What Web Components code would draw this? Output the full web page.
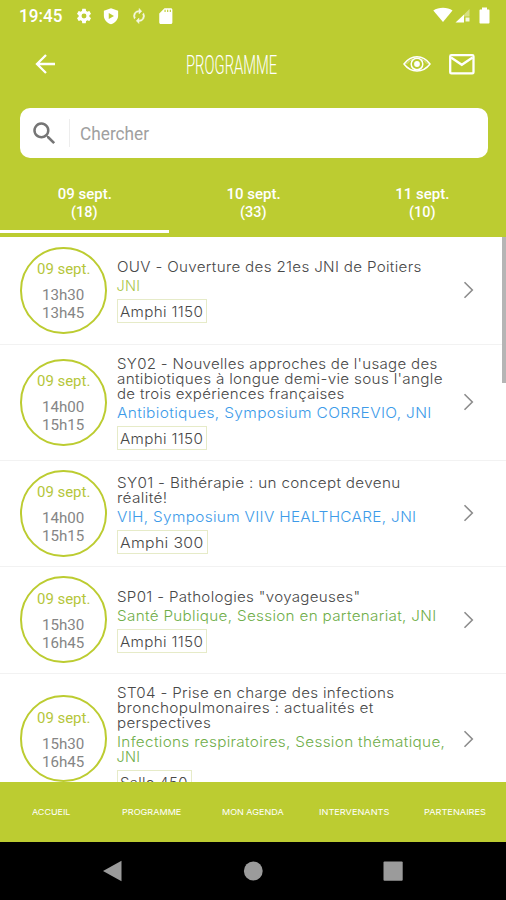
<!DOCTYPE html>
<html lang="fr">
<head>
<meta charset="utf-8">
<title>Programme</title>
<style>
  body {
    margin: 0;
    background: #fff;
    font-family: Roboto, "Liberation Sans", sans-serif;
    --green: #bccc31;
  }
</style>
</head>
<body>
<programme-app></programme-app>

<script>
  // One line of text, stretched to a given width
  class FitLine extends HTMLElement {
    constructor() {
      super();
      this.attachShadow({ mode: "open" });
      this.shadowRoot.innerHTML = `
        <style>
          :host { display: block; white-space: nowrap; }
          span { display: inline-block; transform-origin: 0 50%; }
        </style>
        <span><slot></slot></span>
      `;
    }

    connectedCallback() {
      const width = Number(this.getAttribute("width"));
      const span = this.shadowRoot.querySelector("span");
      this.style.width = width + "px";
      span.style.transform = `scaleX(${width / span.offsetWidth})`;
    }
  }
  window.customElements.define("fit-line", FitLine);

  class StatusBar extends HTMLElement {
    constructor() {
      super();
      this.attachShadow({ mode: "open" });
      this.shadowRoot.innerHTML = `
        <style>
          :host {
            display: flex;
            align-items: center;
            box-sizing: border-box;
            height: 32px;
            padding: 0 16px 0 19px;
            color: #fff;
            font-size: 17.5px;
            font-weight: 500;
          }
          svg { display: block; fill: #fff; }
          .left { display: flex; align-items: center; gap: 9.3px; margin-left: 13px; }
          .right { display: flex; align-items: center; margin-left: auto; margin-top: -2px; }
        </style>
        <fit-line width="43">19:45</fit-line>
        <div class="left">
          <svg width="18" height="18" viewBox="0 0 24 24"><path d="M19.14 12.94c.04-.3.06-.61.06-.94s-.02-.64-.07-.94l2.03-1.58a.5.5 0 0 0 .12-.61l-1.92-3.32a.5.5 0 0 0-.59-.22l-2.39.96a7 7 0 0 0-1.62-.94l-.36-2.54a.48.48 0 0 0-.48-.41h-3.84c-.24 0-.43.17-.47.41l-.36 2.54c-.59.24-1.13.57-1.62.94l-2.39-.96a.5.5 0 0 0-.59.22L2.74 8.87a.48.48 0 0 0 .12.61l2.03 1.58a6.5 6.5 0 0 0 0 1.88l-2.03 1.58a.5.5 0 0 0-.12.61l1.92 3.32c.12.22.37.29.59.22l2.39-.96c.5.38 1.03.7 1.62.94l.36 2.54c.05.24.24.41.48.41h3.84c.24 0 .44-.17.47-.41l.36-2.54a7 7 0 0 0 1.62-.94l2.39.96c.22.08.47 0 .59-.22l1.92-3.32a.5.5 0 0 0-.12-.61zM12 15.3a3.3 3.3 0 1 1 0-6.6 3.3 3.3 0 0 1 0 6.6z"/></svg>
          <svg width="18" height="18" viewBox="0 0 24 24"><path fill-rule="evenodd" d="M12 1.5 2.5 5v6.5c0 5 4 9.5 9.5 11.5 5.5-2 9.5-6.5 9.5-11.5V5zM9 8v8l7-4z"/></svg>
          <svg width="18" height="18" viewBox="-1 -1 26 26" opacity=".85"><path stroke="#fff" stroke-width=".7" d="M12 6v3l4-4-4-4v3a8 8 0 0 0-6.76 12.26l1.46-1.46A6 6 0 0 1 12 6zm6.76 1.74L17.3 9.2A6 6 0 0 1 12 18v-3l-4 4 4 4v-3a8 8 0 0 0 6.76-12.26z"/></svg>
          <svg width="18" height="18" viewBox="0 0 24 24"><path d="M18.5 1.5H10L3 8.5v12c0 1.1.9 2 2 2h13.500c1.1 0 2-.9 2-2v-17c0-1.1-.9-2-2-2zM11.5 6.5H10v-3h1.500zm3.500 0h-1.500v-3H15zm3.500 0H17v-3h1.500z"/></svg>
        </div>
        <div class="right">
          <svg width="20" height="16" viewBox="0 0 20 16"><path d="M.3 3.500C5.5-.2 14.5-.2 19.500 3.500L10 15z"/></svg>
          <svg width="17" height="16" viewBox="0 0 17 16" style="margin-left: 2px"><path d="M.5 15.500 9 7.500V15.500z"/><path d="M9 7.500 14.500 2v7.500H9z" opacity=".4"/><path d="M10.500 10.500h4v4h-4z" opacity=".85"/></svg>
          <svg width="11" height="17" viewBox="0 0 11 17" style="margin-left: 7px"><path d="M3 .5h5v2h1.500c.6 0 1 .4 1 1v12c0 .6-.4 1-1 1h-8c-.6 0-1-.4-1-1v-12c0-.6.4-1 1-1H3z"/></svg>
        </div>
      `;
    }
  }
  window.customElements.define("status-bar", StatusBar);

  class TitleBar extends HTMLElement {
    constructor() {
      super();
      this.attachShadow({ mode: "open" });
      this.shadowRoot.innerHTML = `
        <style>
          :host {
            display: grid;
            grid-template-columns: 150.5px 1fr auto;
            align-items: center;
            height: 64px;
            padding: 0 31px 0 35px;
            color: #fff;
          }
          svg { display: block; fill: none; stroke: #fff; }
          fit-line { padding-top: 2px; font-size: 26px; font-weight: 300; line-height: 62px; }
          .actions { display: flex; align-items: center; gap: 18px; }
        </style>
        <svg width="22" height="22" viewBox="0 0 22 22" stroke-width="2.3"><path d="M20 11H2.5M11 2 2 11l9 9"/></svg>
        <fit-line width="91"><slot></slot></fit-line>
        <div class="actions">
          <svg width="28" height="18" viewBox="0 0 28 18" stroke-width="1.5">
            <path d="M1 9C8-.8 20-.8 27 9 20 18.3 8 18.3 1 9z"/>
            <circle cx="14" cy="9" r="5.8"/>
            <circle cx="14" cy="9" r="2.9" fill="#fff" stroke="none"/>
            <path d="M3.5 9c2-2.500 3.500-3.500 5.500-4.500M24.500 9c-2-2.500-3.500-3.500-5.500-4.500" stroke-width="1" opacity=".5"/>
          </svg>
          <svg width="26" height="22" viewBox="0 0 26 22" stroke-width="2.3"><rect x="1.2" y="2.2" width="23.3" height="18.2" rx="1.2"/><path d="M2 4.500l10.800 7.300 10.800-7.300"/></svg>
        </div>
      `;
    }
  }
  window.customElements.define("title-bar", TitleBar);

  class SearchField extends HTMLElement {
    constructor() {
      super();
      this.attachShadow({ mode: "open" });
      this.shadowRoot.innerHTML = `
        <style>
          :host {
            display: flex;
            align-items: center;
            height: 50px;
            margin: 12px 18.5px 0 20px;
            border-radius: 10px;
            background: #fff;
            color: #a0a0a0;
            font-size: 17.5px;
          }
          svg { display: block; margin-left: 12px; fill: #757575; }
          i { width: 1px; height: 28px; margin: 0 10px 0 12px; background: #ededed; }
          fit-line { padding-top: 2px; }
        </style>
        <svg width="25" height="25" viewBox="2 2 20 20"><path d="M15.5 14h-.79l-.28-.27a6.5 6.5 0 1 0-.7.7l.27.28v.79l5 4.99L20.49 19zm-6 0a4.5 4.5 0 1 1 0-9 4.5 4.5 0 0 1 0 9z"/></svg>
        <i></i>
        <fit-line width="69"><slot></slot></fit-line>
      `;
    }
  }
  window.customElements.define("search-field", SearchField);

  class DayTab extends HTMLElement {
    constructor() {
      super();
      this.attachShadow({ mode: "open" });
      this.shadowRoot.innerHTML = `
        <style>
          :host {
            flex: 1;
            display: flex;
            flex-direction: column;
            align-items: center;
            box-sizing: border-box;
            height: 48px;
            padding-left: 1px;
            color: #fff;
            font-size: 15px;
            font-weight: 500;
            line-height: 18px;
            border-bottom: 3px solid transparent;
          }
          :host([active]) { border-color: #fff; }
        </style>
        <fit-line width="54"><slot></slot></fit-line>
        <fit-line width="27">(${this.getAttribute("count")})</fit-line>
      `;
    }
  }
  window.customElements.define("day-tab", DayTab);

  class SessionRow extends HTMLElement {
    constructor() {
      super();
      this.attachShadow({ mode: "open" });
    }

    connectedCallback() {
      this.render();
    }

    render() {
      const s = this.session;
      const lines = list => list.map(([text, width]) => `<fit-line width="${width}">${text}</fit-line>`).join("");
      this.shadowRoot.innerHTML = `
        <style>
          :host {
            display: grid;
            grid-template-columns: 86.5px 1fr 11px;
            column-gap: 10px;
            align-items: center;
            box-sizing: border-box;
            padding: 0 32.5px 0 20px;
            border-bottom: 1px solid #f2f2f2;
          }
          .when {
            box-sizing: border-box;
            width: 86.5px;
            height: 86.5px;
            padding-top: 11.3px;
            border: 2.5px solid var(--green);
            border-radius: 50%;
            display: flex;
            flex-direction: column;
            align-items: center;
            color: #858585;
            font-size: 15.5px;
            line-height: 18px;
          }
          .date { margin-bottom: 8px; color: #b5c63a; }
          .what {
            padding-top: 2px;
            font-family: Inter, "Liberation Sans", sans-serif;
            font-size: 14.5px;
            font-weight: 300;
            line-height: 15px;
            letter-spacing: .3px;
            color: #484848;
          }
          .tags { margin: 4px 0 6px; color: ${s.color}; }
          .room {
            display: inline-block;
            box-sizing: border-box;
            height: 24px;
            padding: 0 3px 0 2px;
            border: 1px solid #e6ebc8;
            line-height: 24px;
            vertical-align: top;
          }
          svg { display: block; fill: none; stroke: #8c8c8c; stroke-width: 1.6; }
        </style>
        <div class="when">
          <fit-line class="date" width="53">09 sept.</fit-line>
          <fit-line width="42">${s.start}</fit-line>
          <fit-line width="42">${s.end}</fit-line>
        </div>
        <div class="what">
          ${lines(s.title)}
          <div class="tags">${lines(s.tags)}</div>
          <div class="room">${lines([s.room])}</div>
        </div>
        <svg width="11" height="18" viewBox="0 0 11 18"><path d="M1.5 1.2 9.3 9l-7.8 7.8"/></svg>
      `;
    }
  }
  window.customElements.define("session-row", SessionRow);

  const BLUE = "#3d9be9";
  const GREEN = "#6fae4a";

  // Each text line comes with its drawn width
  const sessions = [
    {
      height: 107.5, start: "13h30", end: "13h45", color: "#a9c64a",
      title: [["OUV - Ouverture des 21es JNI de Poitiers", 304.5]],
      tags: [["JNI", 24]],
      room: ["Amphi 1150", 83]
    },
    {
      height: 116.5, start: "14h00", end: "15h15", color: BLUE,
      title: [
        ["SY02 - Nouvelles approches de l'usage des", 320.5],
        ["antibiotiques à longue demi-vie sous l'angle", 326],
        ["de trois expériences françaises", 228]
      ],
      tags: [["Antibiotiques, Symposium CORREVIO, JNI", 314.5]],
      room: ["Amphi 1150", 83]
    },
    {
      height: 105.5, start: "14h00", end: "15h15", color: BLUE,
      title: [["SY01 - Bithérapie : un concept devenu", 283], ["réalité!", 50]],
      tags: [["VIH, Symposium VIIV HEALTHCARE, JNI", 300]],
      room: ["Amphi 300", 84]
    },
    {
      height: 107, start: "15h30", end: "16h45", color: GREEN,
      title: [["SP01 - Pathologies \"voyageuses\"", 243]],
      tags: [["Santé Publique, Session en partenariat, JNI", 319.5]],
      room: ["Amphi 1150", 83]
    },
    {
      height: 131, start: "15h30", end: "16h45", color: GREEN,
      title: [
        ["ST04 - Prise en charge des infections", 278],
        ["bronchopulmonaires : actualités et", 257],
        ["perspectives", 94]
      ],
      tags: [["Infections respiratoires, Session thématique,", 328], ["JNI", 24]],
      room: ["Salle 450", 68]
    }
  ];

  class SessionList extends HTMLElement {
    constructor() {
      super();
      this.attachShadow({ mode: "open" });
      this.shadowRoot.innerHTML = `
        <style>
          :host { display: block; position: relative; overflow: hidden; background: #fff; }
          .thumb {
            position: absolute;
            top: 0;
            right: 0;
            width: 4.5px;
            height: 146px;
            background: #b5b5b5;
          }
        </style>
        <div class="rows"></div>
        <div class="thumb"></div>
      `;
    }

    connectedCallback() {
      const rows = this.shadowRoot.querySelector(".rows");
      sessions.forEach(session => {
        const row = document.createElement("session-row");
        row.session = session;
        row.style.height = session.height + "px";
        rows.appendChild(row);
      });
    }
  }
  window.customElements.define("session-list", SessionList);

  class BottomNav extends HTMLElement {
    constructor() {
      super();
      this.attachShadow({ mode: "open" });
      this.shadowRoot.innerHTML = `
        <style>
          :host {
            display: grid;
            grid-template-columns: repeat(5, 1fr);
            align-items: center;
            justify-items: center;
            height: 60px;
            background: var(--green);
            color: #fff;
            font-family: Inter, "Liberation Sans", sans-serif;
            font-size: 8px;
          }
        </style>
        <fit-line width="38">ACCUEIL</fit-line>
        <fit-line width="59">PROGRAMME</fit-line>
        <fit-line width="62">MON AGENDA</fit-line>
        <fit-line width="70">INTERVENANTS</fit-line>
        <fit-line width="62">PARTENAIRES</fit-line>
      `;
    }
  }
  window.customElements.define("bottom-nav", BottomNav);

  class SystemNav extends HTMLElement {
    constructor() {
      super();
      this.attachShadow({ mode: "open" });
      this.shadowRoot.innerHTML = `
        <style>
          :host {
            display: flex;
            align-items: center;
            justify-content: center;
            gap: 120px;
            height: 58px;
            background: #000;
          }
          svg { display: block; fill: #9b9b9b; }
        </style>
        <svg width="20" height="22" viewBox="0 0 20 22"><path d="M0 11 18.5.8v20.4z"/></svg>
        <svg width="20" height="20" viewBox="0 0 20 20"><circle cx="10.3" cy="10" r="9.4"/></svg>
        <svg width="20" height="20" viewBox="0 0 20 20"><rect x=".5" y=".5" width="19.2" height="19.2" rx="1"/></svg>
      `;
    }
  }
  window.customElements.define("system-nav", SystemNav);

  class ProgrammeApp extends HTMLElement {
    constructor() {
      super();
      this.attachShadow({ mode: "open" });
      this.shadowRoot.innerHTML = `
        <style>
          :host {
            display: grid;
            grid-template-rows: 237px 1fr auto auto;
            height: 900px;
            overflow: hidden;
          }
          header { background: var(--green); }
          .tabs { display: flex; padding-top: 27px; }
        </style>
        <header>
          <status-bar></status-bar>
          <title-bar>PROGRAMME</title-bar>
          <search-field>Chercher</search-field>
          <div class="tabs">
            <day-tab count="18" active>09 sept.</day-tab>
            <day-tab count="33">10 sept.</day-tab>
            <day-tab count="10">11 sept.</day-tab>
          </div>
        </header>
        <session-list></session-list>
        <bottom-nav></bottom-nav>
        <system-nav></system-nav>
      `;
    }
  }
  window.customElements.define("programme-app", ProgrammeApp);
</script>
</body>
</html>
